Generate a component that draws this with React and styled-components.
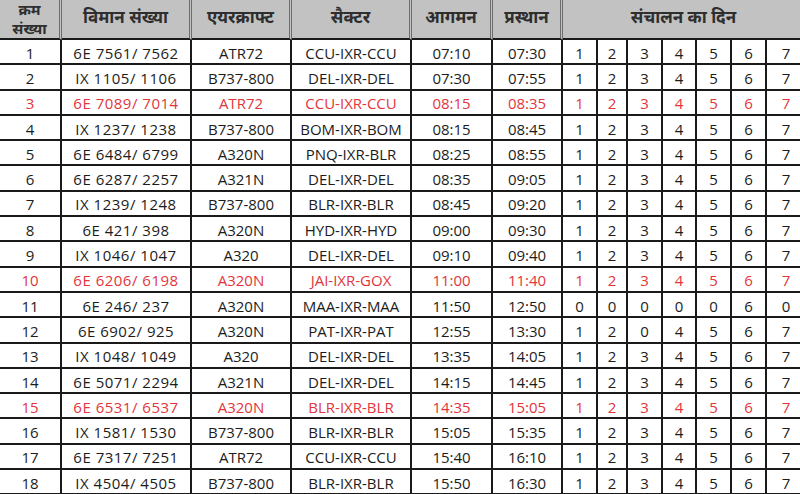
import React from "react";
import styled, { createGlobalStyle } from "styled-components";

const GlobalStyle = createGlobalStyle`
  html, body {
    margin: 0;
    padding: 0;
    background: #ffffff;
    overflow: hidden;
  }
`;

const COLS = "62px 130px 100px 120px 81px 70px 35px 30px 35px 34px 35px 35px 40px";

const Sheet = styled.div`
  display: grid;
  grid-template-columns: ${COLS};
  grid-template-rows: 40px;
  grid-auto-rows: 25.3px;
  width: 812px;
  font-family: "Open Sans", "Noto Sans", "Liberation Sans", sans-serif;
  font-size: 15px;
  color: #1c1c1c;
`;

const HeadCell = styled.div`
  grid-column: ${(p) => (p.$span ? `span ${p.$span}` : "auto")};
  box-sizing: border-box;
  display: flex;
  flex-direction: column;
  align-items: center;
  justify-content: ${(p) => (p.$stack ? "flex-end" : "center")};
  background: #c2c2c2;
  border-right: 3px double #6e6e6e;
  border-bottom: 2px solid #1a1a1a;
  font-weight: 700;
  font-size: ${(p) => (p.$stack ? "15px" : "17px")};
  line-height: ${(p) => (p.$stack ? "19px" : "20px")};
  color: #2e2e2e;
  padding-bottom: ${(p) => (p.$stack ? "0" : "4px")};
  white-space: nowrap;
  overflow: hidden;
`;

const Cell = styled.div`
  box-sizing: border-box;
  display: flex;
  align-items: center;
  justify-content: center;
  padding-top: 2px;
  border-right: 2px solid #1a1a1a;
  border-bottom: 2px solid #1a1a1a;
  color: ${(p) => (p.$red ? "#e2353c" : "#1c1c1c")};
  letter-spacing: ${(p) => (p.$wide ? "0.5px" : "0")};
  white-space: pre;
  overflow: hidden;
`;

const ALL = ["1", "2", "3", "4", "5", "6", "7"];

const flights = [
  ["1", "6E 7561/ 7562", "ATR72", "CCU-IXR-CCU", "07:10", "07:30"],
  ["2", "IX 1105/ 1106", "B737-800", "DEL-IXR-DEL", "07:30", "07:55"],
  ["3", "6E 7089/ 7014", "ATR72", "CCU-IXR-CCU", "08:15", "08:35", true],
  ["4", "IX 1237/ 1238", "B737-800", "BOM-IXR-BOM", "08:15", "08:45"],
  ["5", "6E 6484/ 6799", "A320N", "PNQ-IXR-BLR", "08:25", "08:55"],
  ["6", "6E 6287/ 2257", "A321N", "DEL-IXR-DEL", "08:35", "09:05"],
  ["7", "IX 1239/ 1248", "B737-800", "BLR-IXR-BLR", "08:45", "09:20"],
  ["8", "6E 421/ 398", "A320N", "HYD-IXR-HYD", "09:00", "09:30"],
  ["9", "IX 1046/ 1047", "A320", "DEL-IXR-DEL", "09:10", "09:40"],
  ["10", "6E 6206/ 6198", "A320N", "JAI-IXR-GOX", "11:00", "11:40", true],
  ["11", "6E 246/ 237", "A320N", "MAA-IXR-MAA", "11:50", "12:50", false, ["0", "0", "0", "0", "0", "6", "0"]],
  ["12", "6E 6902/ 925", "A320N", "PAT-IXR-PAT", "12:55", "13:30", false, ["1", "2", "0", "4", "5", "6", "7"]],
  ["13", "IX 1048/ 1049", "A320", "DEL-IXR-DEL", "13:35", "14:05"],
  ["14", "6E 5071/ 2294", "A321N", "DEL-IXR-DEL", "14:15", "14:45"],
  ["15", "6E 6531/ 6537", "A320N", "BLR-IXR-BLR", "14:35", "15:05", true],
  ["16", "IX 1581/ 1530", "B737-800", "BLR-IXR-BLR", "15:05", "15:35"],
  ["17", "6E 7317/ 7251", "ATR72", "CCU-IXR-CCU", "15:40", "16:10"],
  ["18", "IX 4504/ 4505", "B737-800", "BLR-IXR-BLR", "15:50", "16:30"],
];

export default function App() {
  return (
    <>
      <GlobalStyle />
      <Sheet>
        <HeadCell $stack>
          <span>क्रम</span>
          <span>संख्या</span>
        </HeadCell>
        <HeadCell>विमान संख्या</HeadCell>
        <HeadCell>एयरक्राफ्ट</HeadCell>
        <HeadCell>सैक्टर</HeadCell>
        <HeadCell>आगमन</HeadCell>
        <HeadCell>प्रस्थान</HeadCell>
        <HeadCell $span={7}>संचालन का दिन</HeadCell>

        {flights.map(([no, flight, craft, sector, arr, dep, red, days]) => (
          <React.Fragment key={no}>
            <Cell $red={red}>{no}</Cell>
            <Cell $red={red} $wide>{flight}</Cell>
            <Cell $red={red}>{craft}</Cell>
            <Cell $red={red}>{sector}</Cell>
            <Cell $red={red}>{arr}</Cell>
            <Cell $red={red}>{dep}</Cell>
            {(days || ALL).map((d, i) => (
              <Cell key={i} $red={red}>{d}</Cell>
            ))}
          </React.Fragment>
        ))}
      </Sheet>
    </>
  );
}
